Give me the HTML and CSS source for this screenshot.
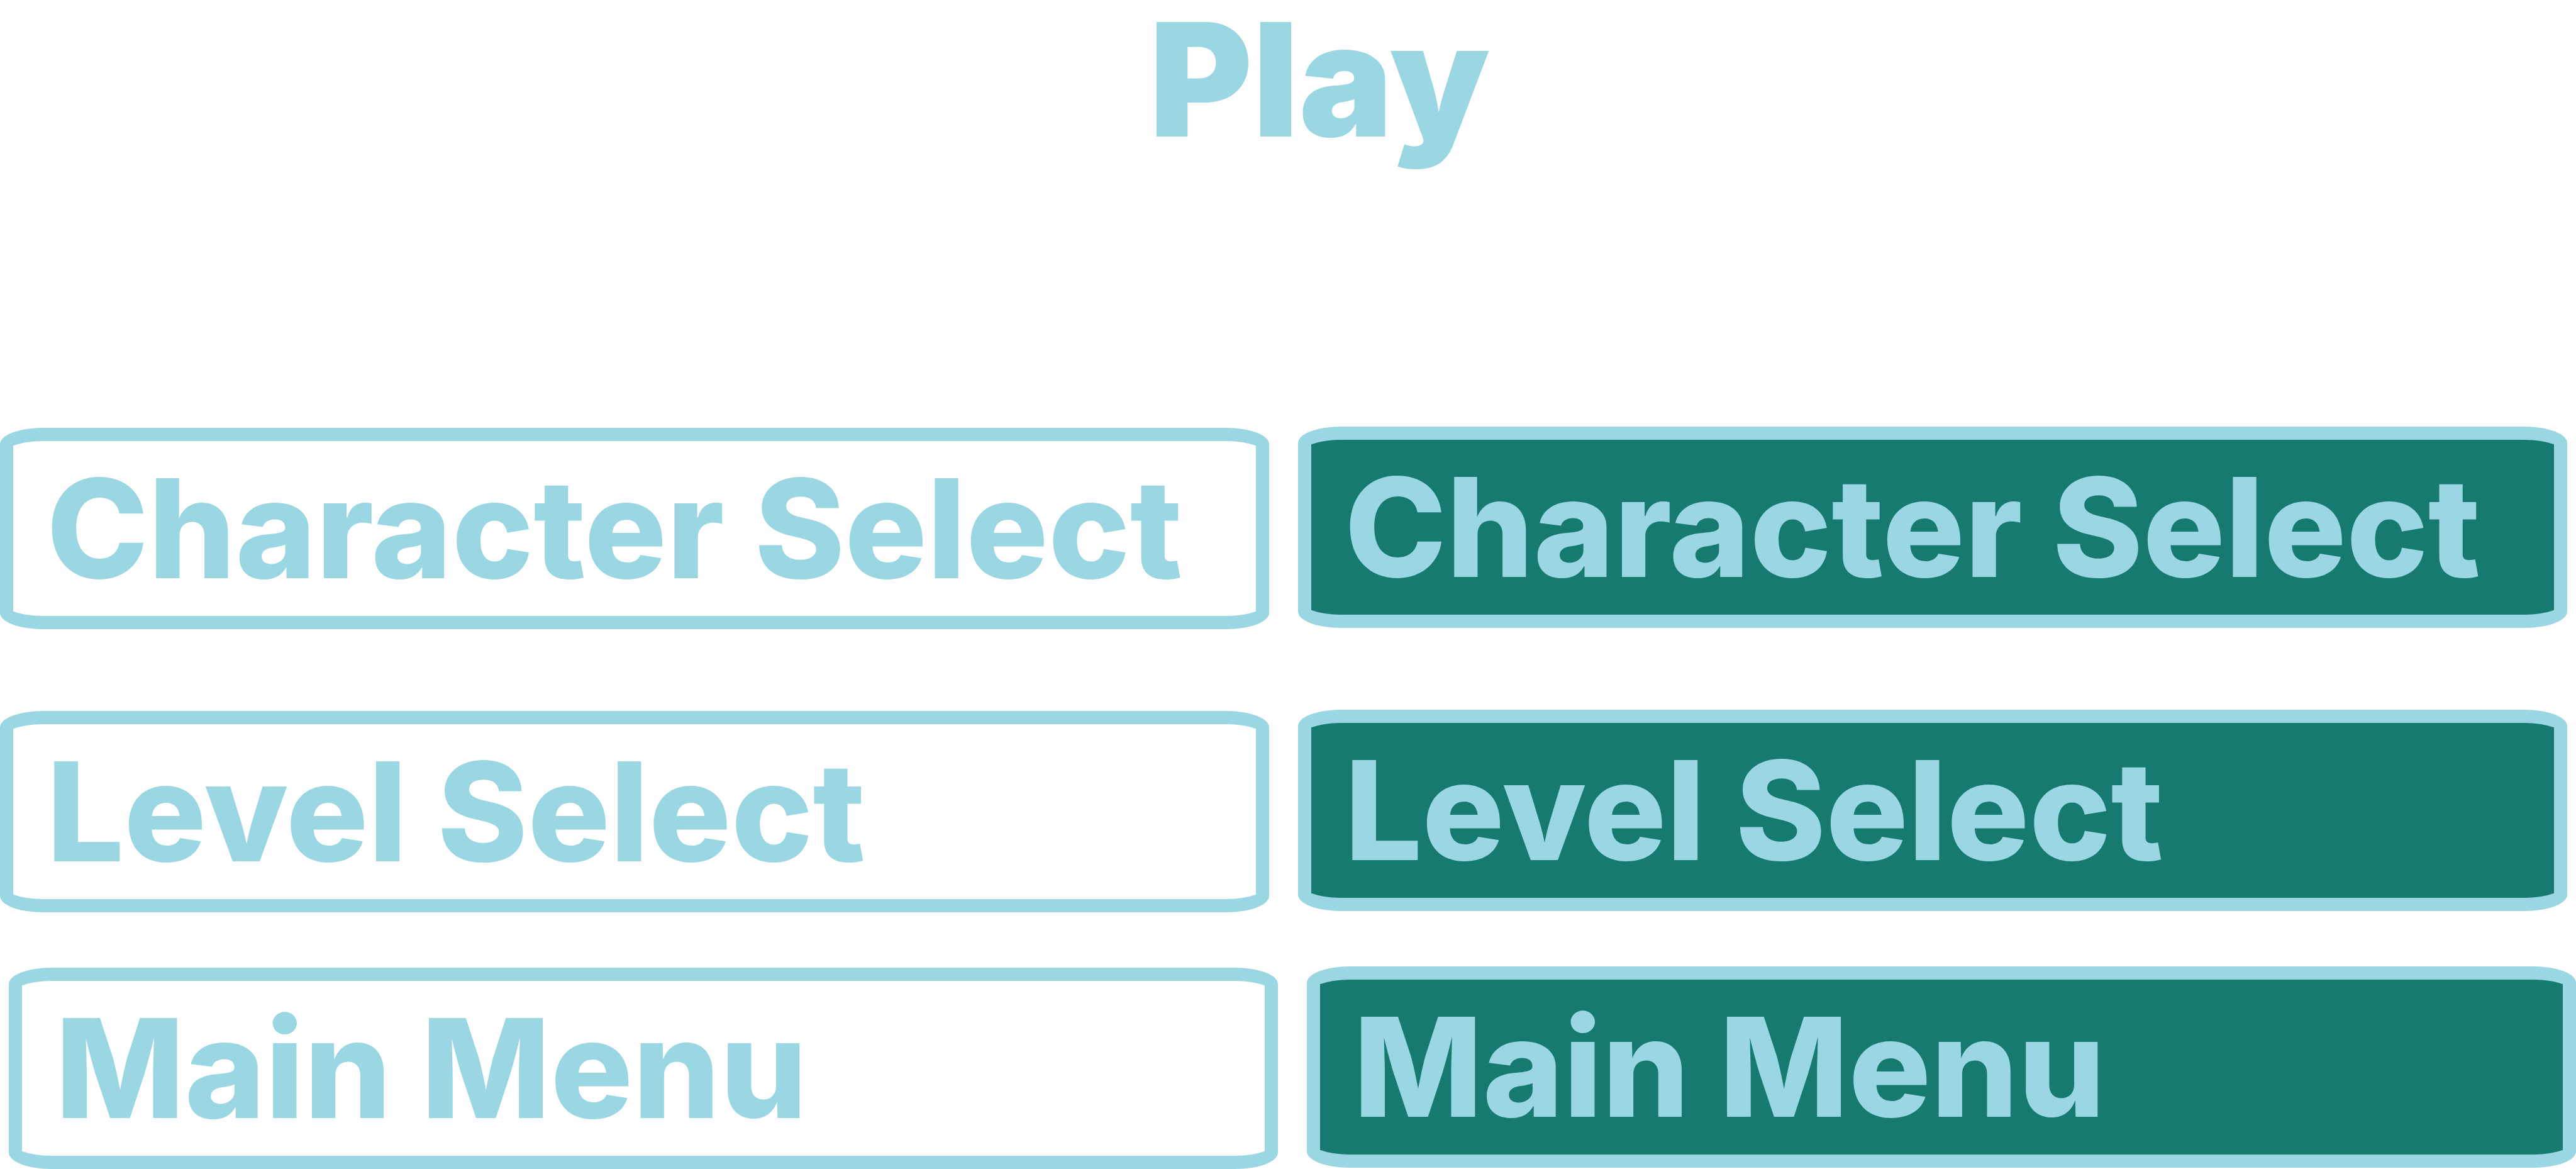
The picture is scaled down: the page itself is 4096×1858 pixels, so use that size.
FILE: index.html
```
<!DOCTYPE html>
<html lang="en">
<head>
<meta charset="utf-8">
<title>Play</title>
<link rel="stylesheet" href="styles.css">
</head>
<body>
<main class="menu">
  <h1 class="menu-title">Play</h1>
  <div class="menu-row">
    <button type="button" class="menu-button">Character Select</button>
    <button type="button" class="menu-button menu-button-active">Character Select</button>
  </div>
  <div class="menu-row">
    <button type="button" class="menu-button">Level Select</button>
    <button type="button" class="menu-button menu-button-active">Level Select</button>
  </div>
  <div class="menu-row menu-row-last">
    <button type="button" class="menu-button">Main Menu</button>
    <button type="button" class="menu-button menu-button-active">Main Menu</button>
  </div>
</main>
</body>
</html>
```
FILE: styles.css
```
* {
  box-sizing: border-box;
}

body {
  margin: 0;
  background: #fff;
  color: #9ad7e2;
  font-family: Futura, Inter, sans-serif;
}

.menu-title {
  margin: 0 0 426px;
  padding-left: 100px;
  font-size: 250px;
  font-weight: 900;
  line-height: 252px;
  text-align: center;
}

.menu-row {
  display: grid;
  grid-template-columns: 1fr 1fr;
  column-gap: 46px;
  margin-bottom: 128px;
  padding-right: 14px;
}

.menu-row-last {
  margin-top: -42px;
  margin-bottom: 0;
  padding-right: 0;
  padding-left: 14px;
}

.menu-button {
  position: relative;
  z-index: 0;
  margin: 2px 0 0;
  padding: 0 0 0 74px;
  border: 0;
  border-radius: 68px / 26px;
  background: #9ad7e2;
  color: inherit;
  font-family: inherit;
  font-size: 218px;
  font-weight: 800;
  line-height: 320px;
  text-align: left;
  white-space: nowrap;
}

/* Inner panel: keeps the outer curve and is cut straight at both sides. */
.menu-button::before {
  content: "";
  position: absolute;
  z-index: -1;
  inset: 21px 0;
  border-radius: 68px / 26px;
  background: #fff;
  clip-path: inset(0 21px);
}

.menu-button-active {
  margin: 0 0 2px;
}

.menu-button-active::before {
  background: #177a70;
}
```
